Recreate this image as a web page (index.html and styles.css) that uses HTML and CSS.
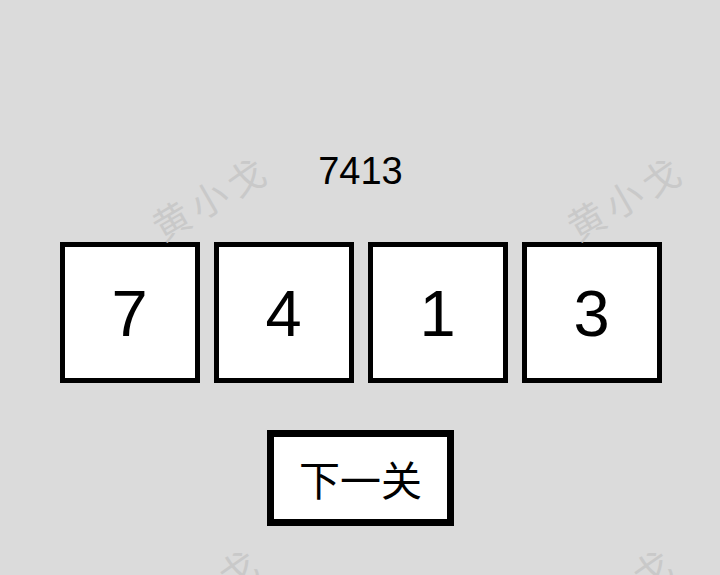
FILE: index.html
```html
<!DOCTYPE html>
<html lang="zh">
<head>
<meta charset="utf-8">
<title>7413</title>
<link rel="stylesheet" href="styles.css">
</head>
<body>
<div class="stage">
  <div class="title">7413</div>
  <div class="cards">
    <div class="card">7</div>
    <div class="card">4</div>
    <div class="card">1</div>
    <div class="card">3</div>
  </div>
  <div class="next">下一关</div>
</div>
<div class="marks">
  <span class="mark m1">黄小戈</span>
  <span class="mark m2">黄小戈</span>
  <span class="mark m3">黄小戈</span>
  <span class="mark m4">黄小戈</span>
</div>
</body>
</html>
```

FILE: styles.css
```css
html, body {
  margin: 0;
  padding: 0;
}
body {
  width: 720px;
  height: 575px;
  overflow: hidden;
  background: #dbdbdb;
  position: relative;
  font-family: "Liberation Sans", Arial, sans-serif;
  color: #000;
}
.stage {
  display: flex;
  flex-direction: column;
  align-items: center;
  padding-top: 149px;
}
.title {
  height: 44px;
  line-height: 44px;
  font-size: 38px;
  padding-left: 1px;
}
.cards {
  display: flex;
  gap: 14px;
  margin-top: 49px;
  padding-left: 1px;
}
.card {
  box-sizing: border-box;
  width: 140px;
  height: 141px;
  border: 5px solid #000;
  background: #fff;
  display: flex;
  align-items: center;
  justify-content: center;
  font-size: 65px;
  padding-top: 2px;
}
.next {
  box-sizing: border-box;
  margin-top: 47px;
  width: 187px;
  height: 96px;
  border: 7px solid #000;
  background: #fff;
  display: flex;
  align-items: center;
  justify-content: center;
  font-family: "Noto Sans CJK SC", "Liberation Sans", sans-serif;
  font-size: 41px;
  padding-left: 1px;
}
.marks {
  position: absolute;
  inset: 0;
  overflow: hidden;
  pointer-events: none;
}
.mark {
  position: absolute;
  transform: translate(-50%, -50%) rotate(-30deg);
  font-family: "Noto Sans CJK SC", sans-serif;
  font-weight: 400;
  font-size: 37px;
  letter-spacing: 6px;
  padding-left: 6px;
  color: #c9c9c9;
  white-space: nowrap;
  line-height: 1;
}
.m1 { left: 208px; top: 198px; }
.m2 { left: 623px; top: 198px; }
.m3 { left: 200px; top: 590px; }
.m4 { left: 614px; top: 590px; }
```
